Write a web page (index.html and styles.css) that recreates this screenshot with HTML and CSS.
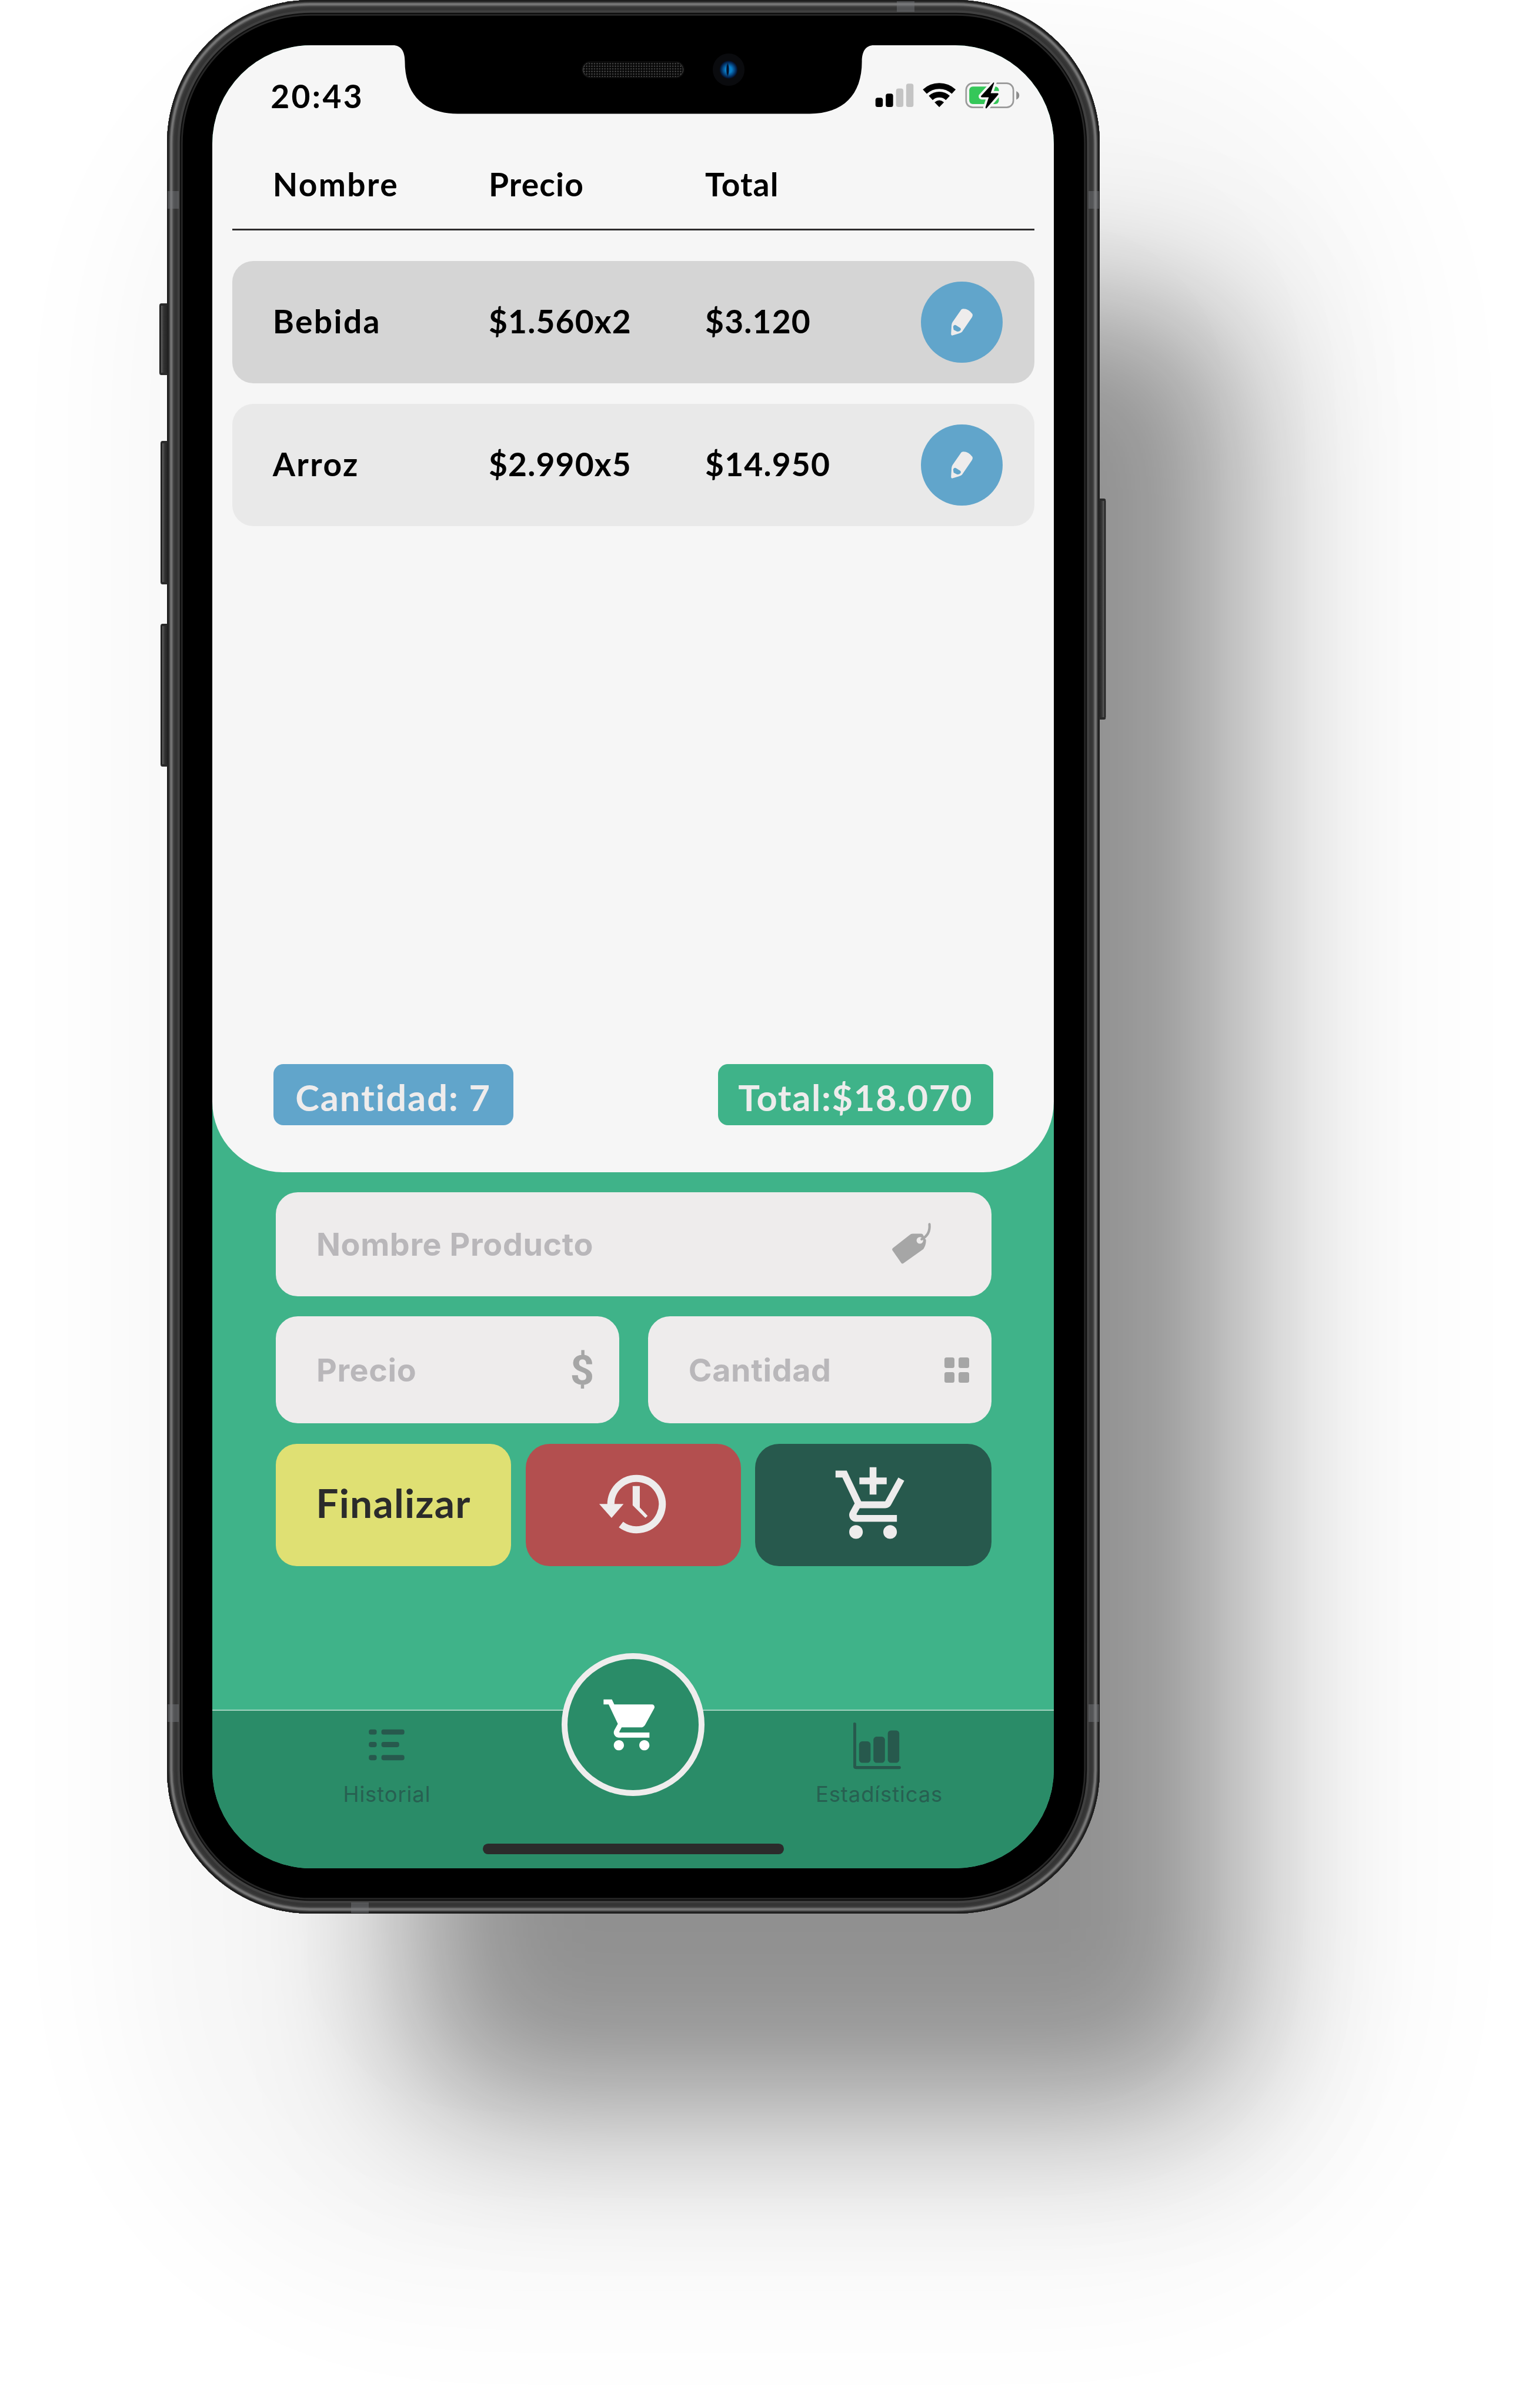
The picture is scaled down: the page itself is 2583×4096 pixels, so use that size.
FILE: index.html
```html
<!DOCTYPE html>
<html lang="es">
<head>
<meta charset="utf-8">
<title>Carrito</title>
<link rel="stylesheet" href="styles.css">
</head>
<body>
<main class="phone">
  <span class="key key-mute"></span>
  <span class="key key-up"></span>
  <span class="key key-down"></span>
  <span class="key key-power"></span>
  <span class="band band-top"></span>
  <span class="band band-bottom"></span>
  <span class="band band-side band-left band-high"></span>
  <span class="band band-side band-right band-high"></span>
  <span class="band band-side band-left band-low"></span>
  <span class="band band-side band-right band-low"></span>

  <div class="screen">
    <section class="panel">
      <header class="status">
        <span class="time">20:43</span>
        <svg class="status-icons" viewBox="0 0 1020 360" aria-hidden="true">
          <rect x="107" y="173" width="42" height="53" rx="13"/>
          <rect x="166" y="149" width="42" height="77" rx="13"/>
          <rect x="225" y="120" width="42" height="106" rx="13" fill="#c4c4c4"/>
          <rect x="283" y="92" width="42" height="134" rx="13" fill="#c4c4c4"/>
          <g fill="none" stroke="#000" stroke-width="33">
            <path d="M390 138A122 122 0 0 1 556 138"/>
            <path d="M424 174A72 72 0 0 1 522 174"/>
          </g>
          <path d="M473 227L446 199Q473 175 500 199Z"/>
          <rect x="627" y="90" width="271" height="138" rx="38" fill="none" stroke="#999" stroke-width="9"/>
          <rect x="645" y="109" width="170" height="100" rx="20" fill="#35c759"/>
          <path d="M915 135Q932 144 932 159Q932 176 915 184Z" fill="#8c8c8c"/>
          <path d="M785 84L712 164Q711 170 716 170H757L738 228Q738 236 744 234L812 154Q814 147 808 147H768L788 88Z" stroke="#f6f6f6" stroke-width="26" paint-order="stroke"/>
        </svg>
      </header>

      <div class="cols head">
        <span>Nombre</span><span>Precio</span><span>Total</span>
      </div>

      <ul class="rows">
        <li class="cols row row-dark">
          <span>Bebida</span><span>$1.560x2</span><span>$3.120</span>
          <button class="edit" aria-label="Editar">
            <svg viewBox="0 0 56 60"><path fill="#eeecec" d="M29 5Q40 4 48 15Q49 18 47 21L28 49Q26 51 22 52L9 56Q7 56 7 53L8 36Q8 33 10 30L26 7Q27 5 29 5Z"/><path fill="#61a5cb" d="M11 39Q12 35 16 36L24 41Q27 43 25 46Q22 49 18 48L12 45Z"/></svg>
          </button>
        </li>
        <li class="cols row">
          <span>Arroz</span><span>$2.990x5</span><span>$14.950</span>
          <button class="edit" aria-label="Editar">
            <svg viewBox="0 0 56 60"><path fill="#eeecec" d="M29 5Q40 4 48 15Q49 18 47 21L28 49Q26 51 22 52L9 56Q7 56 7 53L8 36Q8 33 10 30L26 7Q27 5 29 5Z"/><path fill="#61a5cb" d="M11 39Q12 35 16 36L24 41Q27 43 25 46Q22 49 18 48L12 45Z"/></svg>
          </button>
        </li>
      </ul>

      <div class="summary">
        <span class="badge badge-count">Cantidad: 7</span>
        <span class="badge badge-total">Total:$18.070</span>
      </div>
    </section>

    <form class="form">
      <label class="field field-name">
        <span>Nombre Producto</span>
        <svg class="tag" viewBox="0 0 300 300" aria-hidden="true">
          <path fill="#a6a6a6" d="M152 89H202Q212 91 216 106Q218 116 228 124Q230 152 213 178L98 260Q91 264 86 257L35 184Q32 176 39 171L134 97Q142 89 152 89Z"/>
          <circle cx="193" cy="128" r="19" fill="#eeecec"/>
          <path d="M203 121Q254 96 248 35" fill="none" stroke="#a6a6a6" stroke-width="14" stroke-linecap="round"/>
        </svg>
      </label>
      <div class="field-pair">
        <label class="field field-half"><span>Precio</span><b class="dollar">$</b></label>
        <label class="field field-half"><span>Cantidad</span><i class="grid-icon"><i></i><i></i><i></i><i></i></i></label>
      </div>
      <div class="actions">
        <button type="button" class="btn btn-finish">Finalizar</button>
        <button type="button" class="btn btn-history" aria-label="Deshacer">
          <svg viewBox="0 0 450 390"><path d="M97 192A147.5 147.5 0 1 1 155 308" fill="none" stroke="#eeecec" stroke-width="41"/><path fill="#eeecec" d="M30 190H170L101 270Z"/><path fill="#eeecec" d="M222 87H263V210L308 258L295 270L222 197Z"/></svg>
        </button>
        <button type="button" class="btn btn-add" aria-label="Agregar">
          <svg viewBox="0 0 24 24"><path fill="#eeecec" d="M11 9h2V6h3V4h-3V1h-2v3H8v2h3v3zm-4 9c-1.1 0-1.99.9-1.99 2S5.9 22 7 22s2-.9 2-2-.9-2-2-2zm10 0c-1.1 0-1.99.9-1.99 2s.89 2 1.99 2 2-.9 2-2-.9-2-2-2zm-9.83-3.25l.03-.12.9-1.63h7.45c.75 0 1.41-.41 1.75-1.03l3.86-7.01L19.42 4h-.01l-1.1 2-2.76 5H8.53l-.13-.27L6.16 6l-.95-2-.94-2H1v2h2l3.6 7.59-1.35 2.45c-.16.28-.25.61-.25.96 0 1.1.9 2 2 2h12v-2H7.42c-.13 0-.25-.11-.25-.25z"/></svg>
        </button>
      </div>
    </form>

    <nav class="nav">
      <a class="nav-item">
        <svg viewBox="0 0 100 100"><g fill="#27594d"><rect x="16" y="21" width="15" height="10" rx="4"/><rect x="40" y="21" width="44" height="10" rx="4"/><rect x="16" y="45" width="15" height="10" rx="4"/><rect x="40" y="45" width="34" height="10" rx="4"/><rect x="16" y="70" width="15" height="10" rx="4"/><rect x="40" y="70" width="44" height="10" rx="4"/></g></svg>
        <span>Historial</span>
      </a>
      <a class="fab" aria-label="Carrito">
        <svg viewBox="0 0 24 24"><path fill="#fff" d="M7 18c-1.1 0-1.99.9-1.99 2S5.9 22 7 22s2-.9 2-2-.9-2-2-2zM1 2v2h2l3.6 7.59-1.35 2.45c-.16.28-.25.61-.25.96 0 1.1.9 2 2 2h12v-2H7.42c-.14 0-.25-.11-.25-.25l.03-.12.9-1.63h7.45c.75 0 1.41-.41 1.75-1.03l3.58-6.49c.08-.14.12-.31.12-.48 0-.55-.45-1-1-1H5.21l-.94-2H1zm16 16c-1.1 0-1.99.9-1.99 2s.89 2 1.99 2 2-.9 2-2-.9-2-2-2z"/></svg>
      </a>
      <a class="nav-item nav-stats">
        <svg viewBox="0 0 100 100"><g fill="#27594d"><rect x="11" y="44" width="22" height="41" rx="6"/><rect x="38.500" y="35" width="22" height="50" rx="6"/><rect x="66" y="23" width="22" height="62" rx="6"/></g><path d="M2.500 11V90Q2.500 94 6 94H88" fill="none" stroke="#27594d" stroke-width="6" stroke-linecap="round"/></svg>
        <span>Estadísticas</span>
      </a>
      <span class="home-bar"></span>
    </nav>
  </div>

  <div class="notch">
    <svg viewBox="0 0 920 131" preserveAspectRatio="none"><path d="M0 -4V0C16 0 23 12 23 31C23 95 60 131 124 131H797C861 131 897 95 897 31C897 12 904 0 920 0V-4Z"/></svg>
    <span class="speaker"></span>
    <span class="camera"></span>
  </div>
</main>
</body>
</html>
```
FILE: styles.css
```css
/* 1rem = 100 design units */
html { font-size: 88.92px; }
* { box-sizing: border-box; }
body {
  margin: 0;
  width: 29.04rem;
  height: 46.06rem;
  overflow: hidden;
  background: #fff;
  font-family: Lato, "Open Sans", sans-serif;
  font-variant-ligatures: none;
  color: #000;
}
button { border: 0; padding: 0; font: inherit; color: inherit; }
svg { display: block; }

/* Device */
.phone {
  position: relative;
  width: 17.837rem;
  height: 36.61rem;
  margin-left: 3.197rem;
  padding: .867rem .878rem 0 .86rem;
  border-radius: 2.74rem;
  background: #000;
  box-shadow:
    inset 0 0 0 .02rem #1c1c1c,
    inset 0 0 0 .04rem #262626,
    inset 0 0 0 .06rem #4a4a4a,
    inset 0 0 0 .1rem #747474,
    inset 0 0 0 .12rem #555,
    inset 0 0 0 .15rem #3a3a3a,
    inset 0 0 0 .2rem #343434,
    inset 0 0 0 .245rem #404040,
    inset 0 0 0 .27rem #0e0e0e,
    inset 0 0 0 .3rem #262626,
    inset 0 0 .03rem .32rem #000,
    3.6rem 4.75rem 5.6rem -1rem rgba(0, 0, 0, .41),
    2.5rem 4rem 6rem 3.2rem rgba(0, 0, 0, .04);
}
.key {
  position: absolute;
  left: -.13rem;
  width: .14rem;
  border-radius: .04rem 0 0 .04rem;
  background: linear-gradient(90deg, #1c1c1c 0 .02rem, #5a5a5a .04rem, #333 .08rem, #222);
  border: solid #2a2a2a;
  border-width: .05rem 0;
}
.key-mute { top: 5.8rem; height: 1.37rem; left: -.15rem; width: .16rem; }
.key-up { top: 8.44rem; height: 2.74rem; }
.key-down { top: 11.93rem; height: 2.74rem; }
.key-power {
  top: 9.54rem;
  height: 4.23rem;
  left: auto;
  right: -.12rem;
  width: .13rem;
  transform: scaleX(-1);
}
.band { position: absolute; width: .34rem; height: .2rem; background: rgba(120, 122, 126, .45); }
.band-top { top: .02rem; left: 13.95rem; }
.band-bottom { bottom: .02rem; left: 3.52rem; }
.band-side { width: .21rem; height: .34rem; }
.band-left { left: .01rem; }
.band-right { right: .01rem; }
.band-high { top: 3.65rem; }
.band-low { top: 32.6rem; }

.notch { position: absolute; top: .867rem; left: 4.318rem; width: 9.2rem; height: 1.31rem; }
.notch svg { width: 100%; height: 100%; overflow: visible; }
.speaker {
  position: absolute;
  left: 3.61rem;
  top: .3rem;
  width: 1.97rem;
  height: .33rem;
  border-radius: .165rem;
  background: radial-gradient(circle, #444 30%, #060606 50%) 0 0 / .05rem .05rem;
  border: .03rem solid #0c0c0c;
  box-shadow: inset .01rem 0 0 #555, inset -.01rem 0 0 #555;
}
.camera {
  position: absolute;
  left: 6.115rem;
  top: .162rem;
  width: .61rem;
  height: .61rem;
  border-radius: 50%;
  background:
    radial-gradient(ellipse .03rem .14rem at 47% 50%, #02112c 60%, transparent),
    radial-gradient(circle at 50% 50%, #0a7fc8 0 .06rem, #064a86 .11rem, #031638 .16rem, transparent .175rem),
    #0a0b0e;
}

/* Screen */
.screen {
  display: flex;
  flex-direction: column;
  width: 16.099rem;
  height: 34.876rem;
  border-radius: 1.89rem;
  overflow: hidden;
  background: #3fb389;
}
.panel {
  display: flex;
  flex-direction: column;
  height: 21.553rem;
  padding: 0 .376rem .896rem .388rem;
  border-radius: 0 0 1.35rem 1.35rem;
  background: #f6f6f6;
}
.status {
  display: flex;
  justify-content: space-between;
  align-items: center;
  height: 1.933rem;
  padding-left: .73rem;
}
.time { font-size: .62rem; font-weight: 700; letter-spacing: .038rem; }
.status-icons { width: 3.4rem; height: 1.2rem; margin: .13rem -.01rem 0 0; }

.cols {
  display: grid;
  grid-template-columns: 4.13rem 4.14rem 1fr auto;
  align-items: center;
  padding: 0 .606rem 0 .77rem;
  font-size: .62rem;
  font-weight: 700;
  letter-spacing: .013rem;
}
.cols > span:first-child { letter-spacing: .027rem; }
.head { height: 1.612rem; padding-bottom: .13rem; border-bottom: .04rem solid #2e2c2d; }
.rows {
  display: flex;
  flex-direction: column;
  gap: .386rem;
  margin: .578rem 0 0;
  padding: 0;
  list-style: none;
}
.row { height: 2.347rem; border-radius: .4rem; background: #e9e9e9; }
.row-dark { background: #d5d5d5; }
.row > span { padding-bottom: .05rem; }
.edit {
  display: grid;
  place-items: center;
  width: 1.56rem;
  height: 1.56rem;
  border-radius: 50%;
  background: #61a5cb;
}
.edit svg { width: .56rem; height: .6rem; }

.summary { display: flex; justify-content: space-between; margin-top: auto; padding: 0 .784rem 0 .782rem; }
.badge {
  display: flex;
  align-items: center;
  justify-content: center;
  height: 1.168rem;
  padding-top: .09rem;
  border-radius: .19rem;
  color: #eeecec;
  font-size: .69rem;
  font-weight: 700;
}
.badge-count { width: 4.586rem; background: #61a5cb; letter-spacing: .022rem; }
.badge-total { width: 5.27rem; background: #3fb389; letter-spacing: .019rem; }

/* Form */
.form { display: flex; flex-direction: column; gap: .389rem; padding: .39rem 1.2rem 0 1.213rem; }
.field {
  display: flex;
  align-items: center;
  justify-content: space-between;
  border-radius: .42rem;
  background: #eeecec;
  color: #b9b7ba;
  font-family: Inter, sans-serif;
  font-size: .605rem;
  font-weight: 700;
  letter-spacing: .007rem;
}
.field-name { height: 1.985rem; padding: 0 1.006rem 0 .78rem; }
.tag { width: 1rem; height: 1rem; }
.field-pair { display: grid; grid-template-columns: 1fr 1fr; gap: .55rem; }
.field-half { height: 2.046rem; padding: 0 .42rem 0 .78rem; }
.dollar {
  margin-right: .05rem;
  font-family: Roboto, sans-serif;
  font-size: .8rem;
  font-weight: 700;
  line-height: 1;
  color: #a6a6a6;
}
.grid-icon { display: grid; grid-template-columns: .2rem .2rem; gap: .08rem; }
.grid-icon i { height: .2rem; border-radius: .04rem; background: #a6a6a6; }
.actions { display: grid; grid-template-columns: 4.507rem 1fr 4.512rem; gap: .274rem; }
.btn { display: grid; place-items: center; height: 2.339rem; border-radius: .46rem; }
.btn-finish {
  padding-bottom: .1rem;
  border-radius: .4rem;
  background: #dfe073;
  color: #2b2b2b;
  font-size: .76rem;
  font-weight: 700;
  letter-spacing: .014rem;
}
.btn-history { background: #b34f4f; }
.btn-history svg { width: 1.5rem; height: 1.3rem; }
.btn-add { background: #27594d; }
.btn-add svg { width: 1.565rem; height: 1.565rem; }

/* Bottom navigation */
.nav {
  position: relative;
  display: grid;
  grid-template-columns: 1fr 2.73rem 1fr;
  height: 3.04rem;
  margin-top: auto;
  border-top: .03rem solid #a3d3c0;
  background: #2a8c68;
}
.nav-item {
  display: flex;
  flex-direction: column;
  align-items: center;
  gap: .2rem;
  padding-top: .15rem;
  color: #276051;
  font: 400 .41rem/.5rem Inter, sans-serif;
  letter-spacing: .01rem;
}
.nav-item svg { width: 1rem; height: 1rem; }
.fab {
  display: grid;
  place-items: center;
  width: 2.73rem;
  height: 2.73rem;
  margin-top: -1.1rem;
  border: .115rem solid #efeded;
  border-radius: 50%;
  background: #2a8c68;
}
.fab svg { width: 1.17rem; height: 1.17rem; margin-right: .05rem; }
.home-bar {
  position: absolute;
  left: 5.173rem;
  bottom: .278rem;
  width: 5.76rem;
  height: .195rem;
  border-radius: .1rem;
  background: #2b2b2b;
}
```
